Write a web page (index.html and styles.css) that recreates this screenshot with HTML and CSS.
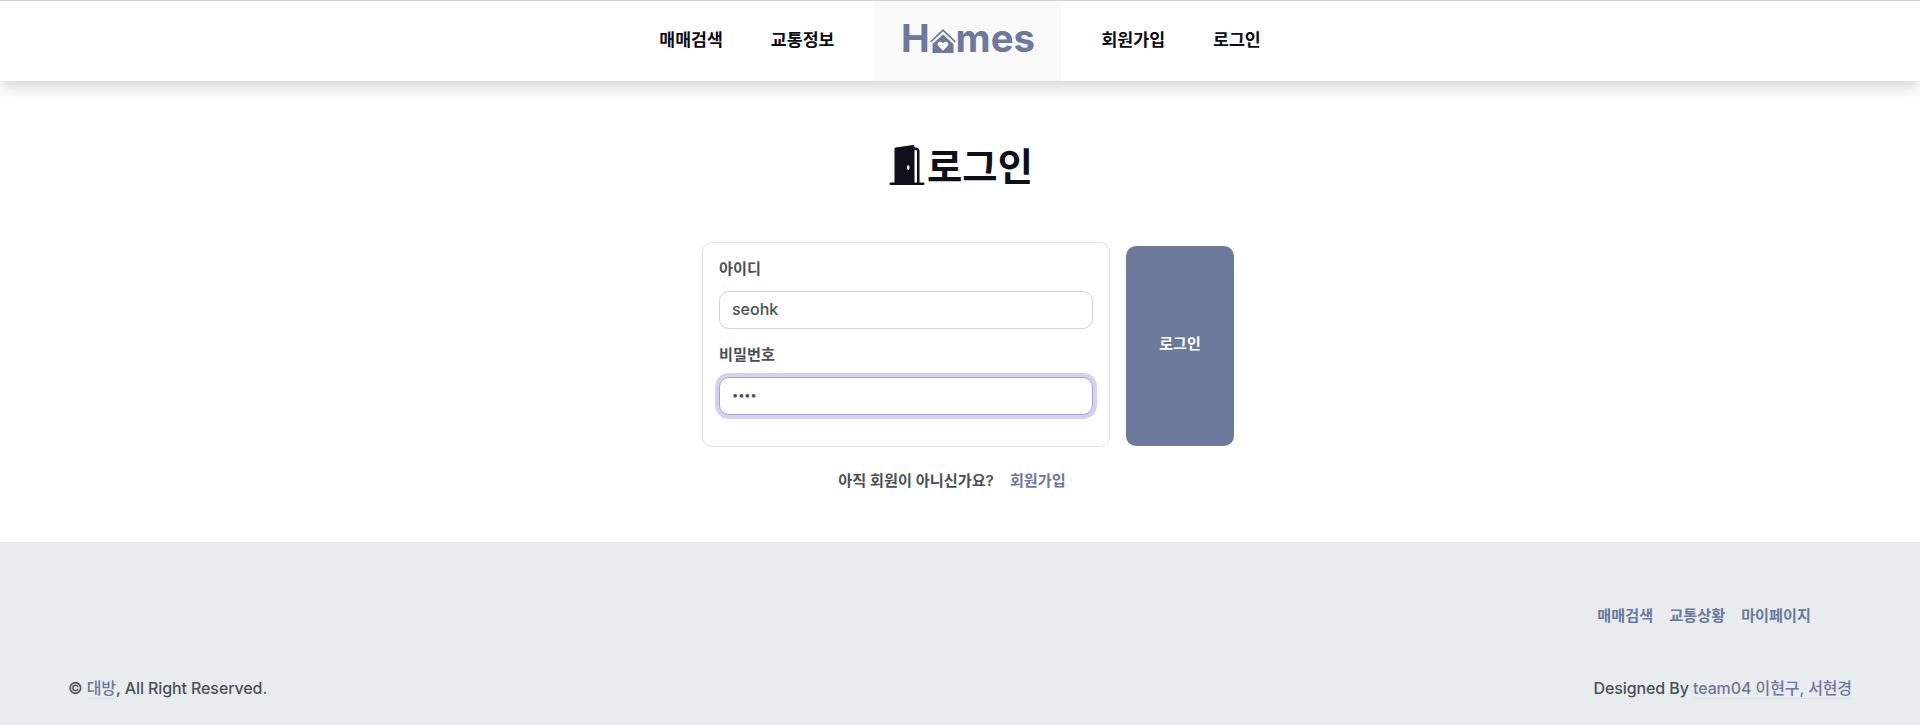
FILE: index.html
```html
<!DOCTYPE html>
<html lang="ko">
<head>
<meta charset="utf-8">
<title>로그인</title>
<link rel="stylesheet" href="styles.css">
</head>
<body>
<header class="header">
  <nav class="nav">
    <a class="nav-link" href="#">매매검색</a>
    <a class="nav-link" href="#">교통정보</a>
    <a class="logo" href="#">H<svg class="logo-house" viewBox="0 0 26 24" aria-hidden="true"><path class="roof" d="M.6 13 13 1.2 25.4 13"/><path class="home" fill-rule="evenodd" d="M13 5.5 23.5 15v9h-21v-9ZM13 21.8l-4.6-4.9c-1.5-1.8-.4-4.1 1.8-4.1 1.2 0 2.1.6 2.8 1.6.7-1 1.6-1.6 2.8-1.6 2.2 0 3.3 2.3 1.8 4.1Z"/></svg>mes</a>
    <a class="nav-link" href="#">회원가입</a>
    <a class="nav-link" href="#">로그인</a>
  </nav>
</header>
<main class="main">
  <h1 class="title"><svg class="door" viewBox="0 0 16 16" aria-hidden="true"><path d="M1.5 15a.5.5 0 0 0 0 1h13a.5.5 0 0 0 0-1H13V2.5A1.5 1.5 0 0 0 11.5 1H11V.5a.5.5 0 0 0-.57-.495l-7 1A.5.5 0 0 0 3 1.5V15H1.5zM11 2h.5a.5.5 0 0 1 .5.5V15h-1V2zm-2.5 8c-.276 0-.5-.448-.5-1s.224-1 .5-1 .5.448.5 1-.224 1-.5 1z"/></svg>로그인</h1>
  <form class="login-row">
    <div class="card">
      <label class="label" for="uid">아이디</label>
      <input class="input" id="uid" type="text" value="seohk">
      <label class="label label-next" for="pw">비밀번호</label>
      <input class="input input-focus" id="pw" type="password" value="1234">
    </div>
    <button class="submit" type="button">로그인</button>
  </form>
  <p class="signup">아직 회원이 아니신가요?<a class="signup-link" href="#">회원가입</a></p>
</main>
<footer class="footer">
  <div class="footer-links">
    <a href="#">매매검색</a>
    <a href="#">교통상황</a>
    <a href="#">마이페이지</a>
  </div>
  <div class="footer-bottom">
    <span>© <a class="credit" href="#">대방</a>, All Right Reserved.</span>
    <span>Designed By <a class="credit" href="#">team04 이현구, 서현경</a></span>
  </div>
</footer>
</body>
</html>
```
FILE: styles.css
```css
* { box-sizing: border-box; }
html, body { margin: 0; padding: 0; }
body {
  font-family: Inter, "Noto Sans CJK KR", sans-serif;
  background: #fff;
  color: #495057;
  height: 725px;
  overflow: hidden;
  display: flex;
  flex-direction: column;
}
a { text-decoration: none; color: inherit; }

.header {
  height: 81px;
  border-top: 1px solid #d0d0d0;
  background: #fff;
  box-shadow: 0 5px 15px rgba(0, 0, 0, .18);
  position: relative;
}
.nav { display: flex; justify-content: center; height: 80px; }
.nav-link {
  display: flex;
  align-items: center;
  padding: 0 24px 6px;
  font-size: 17.3px;
  font-weight: 600;
  color: #0b0b12;
}
.logo {
  display: flex;
  align-items: center;
  justify-content: center;
  width: 187px;
  margin: 0 16px;
  padding-bottom: 5px;
  background: #f9f9f9;
  color: #6c789c;
  font-size: 38.4px;
  font-weight: 700;
  line-height: 1;
}
.logo-house { width: 26px; height: 24px; margin: 5px 0 0; }
.roof { fill: none; stroke: #6c789c; stroke-width: 1.7; }
.home { fill: #6c789c; }

.main {
  height: 461px;
  display: flex;
  flex-direction: column;
  align-items: center;
}
.title {
  display: flex;
  align-items: center;
  height: 60px;
  margin: 53px 0 48px;
  font-size: 38.4px;
  font-weight: 700;
  color: #0d0f1a;
}
.door { width: 40px; height: 40px; margin-top: 1px; fill: #0d0f1a; }

.login-row {
  display: flex;
  align-items: flex-start;
  gap: 16px;
  margin-left: 16px;
}
.card {
  width: 408px;
  height: 205px;
  padding: 14px 16px;
  border: 1px solid #dee2e6;
  border-radius: 10px;
}
.label {
  display: block;
  height: 24px;
  line-height: 24px;
  font-size: 15.2px;
  font-weight: 600;
}
.label-next { margin-top: 14px; }
.input {
  display: block;
  width: 100%;
  height: 38px;
  margin-top: 10px;
  padding: 0 12px 2px;
  border: 1px solid #ced4da;
  border-radius: 10px;
  background: #fff;
  color: #495057;
  font: 500 16px Inter, "Noto Sans CJK KR", sans-serif;
  outline: none;
}
.input-focus {
  border-color: #a99fe0;
  box-shadow: 0 0 0 4px #d6d0f0;
  font-size: 11.6px;
}
.submit {
  width: 108px;
  height: 200px;
  margin-top: 4px;
  padding: 0 0 7px;
  border: 0;
  border-radius: 10px;
  background: #6c789c;
  color: #fff;
  font: 700 15px Inter, "Noto Sans CJK KR", sans-serif;
}
.signup {
  margin: 23px 16px 0 0;
  font-size: 15.2px;
  font-weight: 600;
  line-height: 22px;
}
.signup-link { margin-left: 16px; color: #6c789c; }

.footer {
  flex: 1;
  padding: 0 68px;
  background: #e9ecef;
  font-size: 16px;
  font-weight: 500;
}
.footer-links {
  display: flex;
  justify-content: flex-end;
  gap: 16px;
  padding: 63px 41px 0 0;
  font-size: 15.2px;
  font-weight: 600;
  line-height: 22px;
  color: #6c789c;
}
.footer-bottom {
  display: flex;
  justify-content: space-between;
  margin-top: 49px;
  line-height: 24px;
  letter-spacing: -.1px;
}
.credit { color: #6c789c; border-bottom: 1px solid #dee2e6; }
```
